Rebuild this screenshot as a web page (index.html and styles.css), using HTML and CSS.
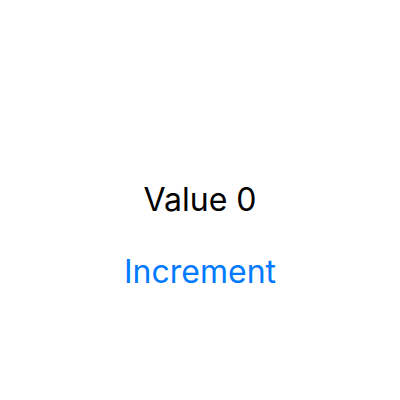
FILE: index.html
```html
<!DOCTYPE html>
<html>
<head>
<meta charset="utf-8">
<link rel="stylesheet" href="styles.css">
</head>
<body>
<main class="screen">
  <div class="value">Value 0</div>
  <button class="btn">Increment</button>
</main>
</body>
</html>
```
FILE: styles.css
```css
html, body {
  margin: 0;
  padding: 0;
  background: #fff;
}
.screen {
  width: 400px;
  height: 400px;
  box-sizing: border-box;
  padding-top: 180px;
  display: flex;
  flex-direction: column;
  align-items: center;
  gap: 32px;
  font-family: Inter, "Liberation Sans", Arial, sans-serif;
}
.value {
  font-size: 32px;
  line-height: 40px;
  color: #000;
}
.btn {
  font-family: inherit;
  font-size: 32px;
  line-height: 40px;
  color: #007aff;
  background: none;
  border: 0;
  padding: 0;
  margin: 0;
}
```
